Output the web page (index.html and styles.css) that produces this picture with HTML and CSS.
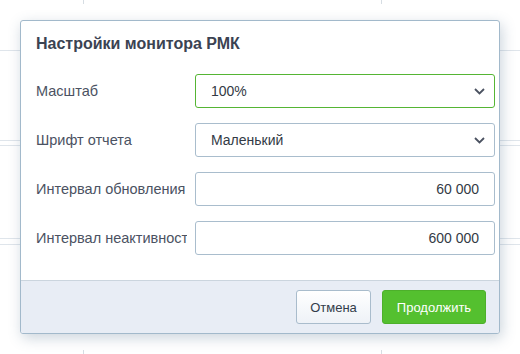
FILE: index.html
```html
<!DOCTYPE html>
<html lang="ru">
<head>
    <meta charset="UTF-8">
    <title>Настройки монитора РМК</title>
    <link rel="stylesheet" href="styles.css">
</head>
<body>
    <div class="dialog">
        <div class="dialog-head">
            <h1>Настройки монитора РМК</h1>
        </div>

        <div class="dialog-body">
            <div class="row">
                <label class="label">Масштаб</label>
                <div class="select active">
                    <span>100%</span>
                    <svg class="chevron" width="11" height="7" viewBox="0 0 11 7"><polyline points="1,1 5.5,5.5 10,1" fill="none" stroke="#4b5261" stroke-width="1.8"/></svg>
                </div>
            </div>
            <div class="row">
                <label class="label">Шрифт отчета</label>
                <div class="select">
                    <span>Маленький</span>
                    <svg class="chevron" width="11" height="7" viewBox="0 0 11 7"><polyline points="1,1 5.5,5.5 10,1" fill="none" stroke="#4b5261" stroke-width="1.8"/></svg>
                </div>
            </div>
            <div class="row">
                <label class="label">Интервал обновления</label>
                <div class="input">60 000</div>
            </div>
            <div class="row">
                <label class="label">Интервал неактивности</label>
                <div class="input">600 000</div>
            </div>
        </div>

        <div class="dialog-foot">
            <button class="btn">Отмена</button>
            <button class="btn btn-primary">Продолжить</button>
        </div>
    </div>
</body>
</html>
```

FILE: styles.css
```css
body {
    margin: 0;
    padding: 20px 0 0 20px;
    height: 354px;
    box-sizing: border-box;
    font-family: 'Liberation Sans', Arial, sans-serif;
    color: #4d5360;
    background-color: #ffffff;
    /* faint grid of the page under the dialog */
    background-image:
        linear-gradient(#dfe5eb, #dfe5eb),
        linear-gradient(#dfe5eb, #dfe5eb),
        linear-gradient(#dfe5eb, #dfe5eb),
        linear-gradient(#dfe5eb, #dfe5eb),
        linear-gradient(#dfe5eb, #dfe5eb),
        linear-gradient(#d6dde3, #d6dde3),
        linear-gradient(#d6dde3, #d6dde3),
        linear-gradient(#d6dde3, #d6dde3),
        linear-gradient(#d6dde3, #d6dde3);
    background-size:
        100% 1px, 100% 1px, 100% 1px, 100% 1px, 100% 1px,
        1px 4px, 1px 4px, 1px 4px, 1px 4px;
    background-position:
        0 50px, 0 140px, 0 145px, 0 238px, 0 244px,
        83px 0, 381px 0, 83px 350px, 381px 350px;
    background-repeat: no-repeat;
}
.dialog {
    width: 480px;
    box-sizing: border-box;
    background-color: #ffffff;
    border: 1px solid #a2b9cb;
    border-radius: 3px;
    box-shadow: 2px 4px 14px rgba(70, 100, 130, 0.28);
    overflow: hidden;
}
.dialog-head {
    padding: 13px 15px 0;
}
h1 {
    margin: 0;
    font-size: 16px;
    line-height: 20px;
    font-weight: bold;
    color: #3b4352;
}
.dialog-body {
    padding: 20px 4px 25px 15px;
    display: flex;
    flex-direction: column;
    gap: 15px;
}
.row {
    display: flex;
    align-items: center;
    height: 34px;
}
.label {
    width: 151px;
    margin-right: 8px;
    flex-shrink: 0;
    font-size: 14.5px;
    white-space: nowrap;
    overflow: hidden;
    color: #4b5262;
}
.select,
.input {
    width: 300px;
    height: 34px;
    box-sizing: border-box;
    border: 1px solid #a9bdcd;
    border-radius: 3px;
    font-size: 14px;
    color: #333a45;
    display: flex;
    align-items: center;
}
.select {
    padding: 0 9px 0 15px;
    justify-content: space-between;
}
.select.active {
    border-color: #55b534;
}
.input {
    justify-content: flex-end;
    padding-right: 15px;
}
.chevron {
    display: block;
}
.dialog-foot {
    border-top: 1px solid #cbd5de;
    background-color: #e8edf5;
    padding: 9px 13px 9px 0;
    display: flex;
    justify-content: flex-end;
    gap: 11px;
}
.btn {
    height: 34px;
    padding: 0;
    border: 1px solid #a9bccc;
    border-radius: 3px;
    background: linear-gradient(#ffffff, #eef2f7);
    font-family: 'Liberation Sans', Arial, sans-serif;
    font-size: 13px;
    color: #333d4a;
    width: 75px;
}
.btn-primary {
    width: 104px;
    background: #54c02f;
    border-color: #4db02b;
    color: #ffffff;
}
```
